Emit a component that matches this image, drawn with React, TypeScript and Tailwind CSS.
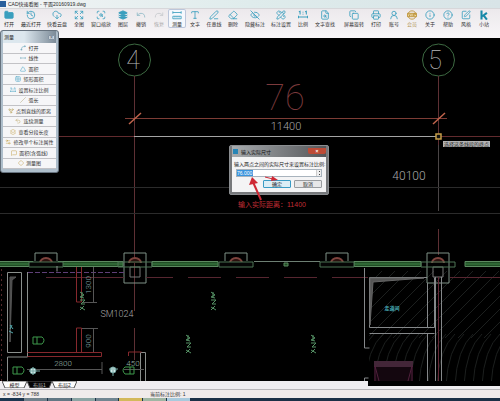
import React from "react";
import {
  Folder, History, CloudDownload, Expand, ScanSearch, Layers, Undo, Redo, Type, PenLine, Eraser,
  EyeOff, PencilRuler, FileSearch, Copy, Printer, UserRound, Info, CircleHelp, SquarePen,
  Spline, Triangle, Grid2x2, Slash, GitFork, Undo2, Layers2, Settings2, MessageSquare, Diamond,
  type LucideIcon,
} from "lucide-react";

type IconType = LucideIcon | React.FC<{ className?: string }>;

const Measure: React.FC<{ className?: string }> = ({ className }) => (
  <svg viewBox="0 0 24 24" className={className} fill="none" stroke="currentColor" strokeWidth="2" aria-hidden="true">
    <path d="M2 6h20M2 3v6M22 3v6M2 15h20v6H2zM7 15v3M12 15v3M17 15v3" />
  </svg>
);
const Ratio: React.FC<{ className?: string }> = ({ className }) => (
  <svg viewBox="0 0 24 24" className={className} fill="none" stroke="currentColor" strokeWidth="2.5" aria-hidden="true">
    <path d="M2 4l3-1v8M17 4l3-1v8M12 4v2M12 9v2M1 17h22M1 14v6M23 14v6" />
  </svg>
);
const Linear: React.FC<{ className?: string }> = ({ className }) => (
  <svg viewBox="0 0 24 24" className={className} fill="none" stroke="currentColor" strokeWidth="2" aria-hidden="true">
    <path d="M5 12h14" />
    <circle cx="3" cy="12" r="2" />
    <circle cx="21" cy="12" r="2" />
  </svg>
);
const Vip: React.FC<{ className?: string }> = ({ className }) => (
  <svg viewBox="0 0 24 24" className={className} fill="none" stroke="currentColor" strokeWidth="2" aria-hidden="true">
    <circle cx="12" cy="12" r="10" />
    <path d="M1 8h22v8H1z" fill="#f4e6bd" />
    <path d="M4 9l2 6 2-6M12 9v6M16 15V9h4v3h-4" />
  </svg>
);
const Station: React.FC<{ className?: string }> = ({ className }) => (
  <svg viewBox="0 0 24 24" className={className} fill="none" stroke="#1789a8" strokeWidth="5" aria-hidden="true">
    <path d="M6 1v22M19 7L8 15M11 13l8 10" />
  </svg>
);

type Tool = { label: string; icon: IconType; fill?: boolean; tone?: string; active?: boolean; gap?: boolean };

const tools: Tool[] = [
  { label: "打开", icon: Folder, fill: true },
  { label: "最近打开", icon: History },
  { label: "快看云盘", icon: CloudDownload },
  { label: "全图", icon: Expand },
  { label: "窗口缩放", icon: ScanSearch },
  { label: "图层", icon: Layers, fill: true },
  { label: "撤销", icon: Undo, tone: "text-[#8fb9c6]" },
  { label: "恢复", icon: Redo, tone: "text-[#c5c9cc]" },
  { label: "测量", icon: Measure, active: true },
  { label: "文字", icon: Type },
  { label: "任意线", icon: PenLine },
  { label: "删除", icon: Eraser },
  { label: "隐藏标注", icon: EyeOff },
  { label: "标注设置", icon: PencilRuler },
  { label: "比例", icon: Ratio },
  { label: "文字查找", icon: FileSearch },
  { label: "屏幕旋转", icon: Copy, gap: true },
  { label: "打印", icon: Printer },
  { label: "账号", icon: UserRound },
  { label: "会员", icon: Vip, tone: "text-[#b98d2d]" },
  { label: "关于", icon: Info },
  { label: "帮助", icon: CircleHelp },
  { label: "风格", icon: SquarePen },
  { label: "小站", icon: Station },
];

function toolWidth(label: string) {
  if (label.length === 4) return "w-[26px]";
  if (label.length === 3) return "w-5";
  return "w-[18px]";
}

function ToolButton({ label, icon: Icon, fill, tone, active, gap }: Tool) {
  return (
    <button
      type="button"
      className={`flex h-[19px] shrink-0 flex-col items-center gap-px rounded-[2px] pt-px whitespace-nowrap ${toolWidth(label)} ${
        gap ? "ml-[3px]" : ""
      } ${active ? "bg-[#f5f8fd] ring-1 ring-[#bcc6da] ring-inset" : ""}`}
    >
      <Icon className={`size-[10px] ${tone ?? "text-[#3a9fbe]"} ${fill ? "fill-[#3a9fbe]" : ""}`} />
      <span className={label === "会员" ? "text-[#b59a5c]" : label === "恢复" ? "text-[#a5a5a5]" : "text-[#2f2f2f]"}>{label}</span>
    </button>
  );
}

const measures: { label: string; icon: IconType; tone: string }[] = [
  { label: "打开", icon: Spline, tone: "text-[#5f9fb4]" },
  { label: "线性", icon: Linear, tone: "text-[#5f9fb4]" },
  { label: "面积", icon: Triangle, tone: "text-[#3f9fc0]" },
  { label: "矩形面积", icon: Grid2x2, tone: "text-[#3f9fc0]" },
  { label: "设置标注比例", icon: Ratio, tone: "text-[#3f9fc0]" },
  { label: "弧长", icon: Slash, tone: "text-[#b3a678]" },
  { label: "点到直线的距离", icon: GitFork, tone: "text-[#bda667]" },
  { label: "连续测量", icon: Undo2, tone: "text-[#bda667]" },
  { label: "查看分段长度", icon: Layers2, tone: "text-[#c5a24e]" },
  { label: "修改单个标注属性", icon: Settings2, tone: "text-[#c5a24e]" },
  { label: "面积(含弧线)", icon: MessageSquare, tone: "text-[#c5a24e]" },
  { label: "测量图", icon: Diamond, tone: "text-[#c5a24e]" },
];

function MeasurePalette() {
  return (
    <section aria-label="测量" className="absolute top-[30px] left-0 w-[59px] rounded-[3px] border border-[#66727e] bg-[#aebecb] px-[2px] pb-[3px]">
      <header className="flex h-3 items-center justify-between bg-linear-to-r from-[#dce7ee] from-40% to-[#7c8b98] px-px text-[#222]">
        <h2>测量</h2>
        <button type="button" aria-label="关闭" className="flex h-[5px] w-[7px] items-center justify-center rounded-[1px] border border-[#8594a4] bg-[#c8d2da] text-[#55606b]">×</button>
      </header>
      <ul className="grid h-[126px] grid-rows-12 bg-[#c9c9cc]">
        {measures.map(({ label, icon: Icon, tone }) => (
          <li key={label} className="flex border-b border-[#c2c2c6] bg-[#f6f6f8]">
            <button type="button" className="flex flex-1 items-center justify-center gap-[2px] whitespace-nowrap text-[#333]">
              <Icon className={`size-[6px] shrink-0 ${tone}`} />
              {label}
            </button>
          </li>
        ))}
      </ul>
    </section>
  );
}

function Column({ x, open }: { x: number; open?: boolean }) {
  return (
    <g fill="none" stroke="#7f9186" strokeWidth="1">
      <path d={open ? `M${x - 11} 261v-8h22v8` : `M${x - 11} 253h22v30h-22z`} />
      {!open && <path d={`M${x - 5} 267h10v10h-10z`} stroke="#777" />}
      <path d={`M${x - 6} 263a6 5 0 0 1 12 0`} stroke="#7d433d" strokeWidth="2" fill="#2a100e" />
      <path d={`M${x - 17} 262v5h34v-5z`} stroke="#4d7454" fill={open ? "#050505" : "none"} />
    </g>
  );
}

function Toilet({ x, y, flip }: { x: number; y: number; flip?: boolean }) {
  const s = flip ? -1 : 1;
  return <path d={`M${x} ${y - 3}h${9 * s}q${4 * s} 3 0 7h${-9 * s}zM${x + 4 * s} ${y - 3}v7`} fill="none" stroke="#3f9a4c" />;
}

function Dim({ x, y, size, children, color = "#a8a8a8", turn }: { x: number; y: number; size: number; children: string; color?: string; turn?: boolean }) {
  return (
    <text x={x} y={y} fontSize={size} fill={color} fontWeight="300" textAnchor="middle" transform={turn ? `rotate(-90 ${x} ${y})` : undefined} fontFamily="Roboto, sans-serif">
      {children}
    </text>
  );
}

const diagonals = Array.from({ length: 17 }, (_, i) => 276 + i * 13);
const steep = Array.from({ length: 18 }, (_, i) => 356 + i * 9);

function Drawing() {
  return (
    <svg viewBox="0 38 500 343" className="block w-full bg-black" role="img" aria-label="平面图">
      <clipPath id="hatch"><path d="M369 271H500V381H369z" /></clipPath>
      <g clipPath="url(#hatch)" stroke="#1c1f1e" strokeWidth="1" fill="none">
        {diagonals.map((x) => <path key={x} d={`M${x} 338l68-68`} />)}
        {steep.map((x) => <path key={x} d={`M${x} 385q2-36 18-51`} />)}
      </g>

      {/* axes and dimension lines */}
      <g fill="none" strokeWidth="1">
        <circle cx="134.500" cy="60" r="16" stroke="#3d6a42" />
        <circle cx="438.500" cy="60" r="16" stroke="#3d6a42" />
        <path d="M134.500 76V311M134.500 328V360M438.500 76V211M438.500 229V255" stroke="#5e3034" />
        <path d="M438.500 145V211" stroke="#4a4546" />
        <path d="M125 118.500H447" stroke="#7d3c35" />
        <path d="M129 124l12-11M433 124l12-11" stroke="#c0644c" strokeWidth="1.500" />
        <path d="M0 136.500H134M438 136.500H500" stroke="#622b2e" />
        <path d="M134 136.500H438" stroke="#a4a4a4" />
        <path d="M0 187.500H500M0 213.500H500" stroke="#2b2b2b" />
        <path d="M436 134h5v5h-5z" stroke="#c59d48" fill="#111" strokeWidth="1.500" />
      </g>
      <text x="133" y="69" fontSize="25" fontWeight="100" fontFamily="Roboto, sans-serif" fill="#b8b8b8" textAnchor="middle">4</text>
      <text x="435" y="69" fontSize="25" fontWeight="100" fontFamily="Roboto, sans-serif" fill="#b8b8b8" textAnchor="middle">5</text>
      <text x="285" y="110" fontSize="36" fontWeight="100" fontFamily="Roboto, sans-serif" fill="#7c3a3c" textAnchor="middle">76</text>
      <Dim x={286} y={130} size={11}>11400</Dim>
      <Dim x={409} y={180} size={12}>40100</Dim>

      {/* window wall */}
      <g fill="#204d25" stroke="#5d8b61" strokeWidth="1">
        <path d="M-1 261.500h34v5h-34zM58 261.500h65v5H58zM152 261.500h66v5h-66zM354 261.500h67v5h-67zM465 261.500h36v5h-36z" />
        <path d="M0 264h33M58 264h65M152 264h66M354 264h67M465 264h35" stroke="#3f8247" />
        <path d="M254 261.500h66" stroke="#6d7f73" />
        <path d="M284 263h4v3h-4z" />
      </g>
      <Column x={46} open />
      <Column x={135} />
      <Column x={236} open />
      <Column x={337} open />
      <Column x={438} />
      <path d="M46 277.500H124M146 277.500H173M188 277.500H221M236 277.500H269M284 277.500H317M332 277.500H368M450 277.500H500" stroke="#572630" />
      <path d="M28 272.500H124" stroke="#5f3f78" strokeDasharray="5 2" />
      <path d="M1.500 269V381" stroke="#54292b" strokeDasharray="2 3" />

      {/* left rooms */}
      <g fill="none" stroke="#8a8f8c" strokeWidth="1">
        <path d="M7.500 272.500h14v80h-14zM7.500 381v-24h20V272M57 271.500V266M140.500 381V352.500h5V381" />
        <path d="M10 277h6l-4 3-2 62z" fill="#4b4b4b" stroke="#555" />
      </g>
      <g fill="none" stroke="#86282d" strokeWidth="1">
        <path d="M76.500 267v35h5v-35M76.500 352v-24h5v24M27.500 352.500h74v4h-74M128.500 356v-4h13" />
      </g>
      <path d="M12 325l-2 4M10 325l3 4M9 331l4 2" stroke="#51a8ac" />
      <g stroke="#565656" fill="none">
        <path d="M93.500 267v35M83 302.500h14M93.500 328v24M82 328.500h16M27 369.500h75M102 362v12M124 369.500h20" />
      </g>
      <Dim x={91} y={285} size={8} color="#80a4a7" turn>1300</Dim>
      <Dim x={91} y={341} size={8} color="#80a4a7" turn>900</Dim>
      <Dim x={63} y={366} size={8} color="#9bb7aa">2800</Dim>
      <Dim x={133} y={366} size={8} color="#9bb7aa">450</Dim>
      <Dim x={117} y={317} size={9}>SM1024</Dim>
      <Toilet x={33} y={340} />
      <Toilet x={13} y={370} />
      <Toilet x={134} y={370} flip />
      <g fill="#d1e8e7" stroke="#74a5a1">
        <circle cx="33" cy="371" r="3" />
        <path d="M29 371h11M33 367v8" />
        <circle cx="113" cy="370" r="3" />
        <path d="M109 369h9M113 370v6" />
      </g>
      {[[82, 301], [213, 301], [188, 344], [313, 344]].map(([x, y]) => (
        <path key={`${x}-${y}`} d={`M${x - 2} ${y - 9}l4 3-4 2 4 1M${x} ${y - 9}v5M${x - 2} ${y - 1}h5l-4 4h4M${x - 2} ${y + 6}l5 3M${x + 2} ${y + 5}l-4 4`} fill="none" stroke="#559165" />
      ))}

      {/* right rooms */}
      <g fill="none" stroke="#85888a" strokeWidth="1">
        <path d="M364.500 268v80h5M364.500 381v-3h4M369.500 277.500H427M369.500 277.500v50h65v-50M369.500 333.500h65M427.500 283v45M427.500 333V381M435.500 277V381M441.500 277V381" />
        <path d="M370 278h54l-51 4-3 43z" fill="#555" stroke="#666" />
      </g>
      <path d="M438.500 277V381" stroke="#652937" />
      <path d="M374 361h39v6h-39z" fill="#432638" />
      <path d="M374 367h39v14h-39z" fill="#14070f" />
      <path d="M375 366l4 15M412 366l-4 15M375 366v15M412 366v15" stroke="#51203d" />
      <text x="392" y="310" fontSize="5" fontWeight="700" fill="#4ab1bc" textAnchor="middle" fontFamily="'Noto Sans CJK SC', sans-serif">走道间</text>
    </svg>
  );
}

function RatioDialog() {
  return (
    <form role="dialog" aria-label="输入实际尺寸" onSubmit={(e) => e.preventDefault()} className="absolute top-[107px] left-[229px] w-[100px] rounded-[2px] border border-[#8b8e91] bg-[#77797c] px-[2px] pb-[2px]">
      <header className="flex h-[11px] items-center gap-[3px] bg-linear-to-r from-[#a8acaf] to-[#55575a] text-[#151515]">
        <span className="ml-px size-[5px] bg-[#2785b6]" />
        <h2>输入实际尺寸</h2>
        <button type="button" aria-label="关闭" className="mb-[2px] ml-auto flex h-[6px] w-[18px] items-center justify-center rounded-b-[2px] bg-[#bd4b36] font-bold text-white">×</button>
      </header>
      <div className="flex h-[35px] flex-col bg-[#f4f4f5] px-[2px] pt-[4px] text-[#222]">
        <label htmlFor="distance" className="whitespace-nowrap">输入两点之间的实际尺寸来设置标注比例:</label>
        <div className="mx-[2px] mt-[2px] flex h-[8px] items-center border border-[#a8b3bd] bg-white">
          <input id="distance" defaultValue="76.000" className="h-[6px] w-4 bg-[#3994dd] text-white outline-none" />
          <span className="ml-auto flex h-full w-[5px] flex-col items-center justify-evenly border-l border-[#ccc] bg-[#eee]">
            <i className="size-px bg-[#444]" />
            <i className="size-px bg-[#444]" />
          </span>
        </div>
        <div className="mx-[2px] mt-[3px] flex justify-end gap-[3px]">
          <button type="submit" className="h-[8px] w-[28px] rounded-[1px] border border-[#3a9bc4] bg-[#dceef6]">确定</button>
          <button type="button" className="h-[8px] w-[28px] rounded-[1px] border border-[#9a9da0] bg-[#e7e7e8]">取消</button>
        </div>
      </div>
    </form>
  );
}

const taskColors = ["bg-[#1b3650]", "bg-[#70818c]", "bg-[#627784]", "bg-[#8ba4a4]", "bg-[#718591]", "bg-[#d3b95b]", "bg-[#9fb6a4]", "bg-[#a8cadd]"];

export default function App() {
  return (
    <div className="relative flex min-h-screen w-full flex-col overflow-hidden bg-[#f0edf0] font-['Liberation_Sans','Noto_Sans_CJK_SC',sans-serif] text-[5px] leading-[6px]">
      <header className="flex h-2 items-center gap-[2px] bg-linear-to-r from-[#f2f4f5] via-[#dfecec] to-[#d8e4e7] text-[#292929]">
        <span className="size-[6px] bg-[#285f9c]" />
        <h1>CAD快速看图 - 平面20160919.dwg</h1>
      </header>
      <nav aria-label="工具栏" className="flex h-[30px] border-t border-[#d7d7da] bg-linear-to-b from-[#ece9ec] to-[#f8f6f8]">
        {tools.map((tool) => <ToolButton key={tool.label} {...tool} />)}
      </nav>

      <main className="relative">
        <Drawing />
        <p className="absolute top-[103px] left-[443px] bg-[#b4b4b4] px-px whitespace-nowrap text-[#292929]">选择这条线段的终点</p>
        <RatioDialog />
        <svg viewBox="0 0 40 36" className="absolute top-[136px] left-[244px] h-9 w-10" fill="none" stroke="#ce2935" aria-hidden="true">
          <path d="M17 26L9 8" strokeWidth="2" />
          <path d="M8 3L5 11l9-2z" fill="#ce2935" stroke="none" />
          <path d="M21 3l8 2" strokeWidth="1" />
          <path d="M28 2l6 4-7 1z" fill="#ce2935" stroke="none" />
        </svg>
        <p className="absolute top-[162px] left-[238px] text-[7px] leading-[9px] whitespace-nowrap text-[#c12d35]">输入实际距离：11400</p>
      </main>
      <MeasurePalette />

      <nav aria-label="布局" className="flex h-[9px] border-b border-[#b9b7ba] bg-[#efedf0] pl-[2px]">
        {["模型", "布局1", "布局2"].map((tab, i) => (
          <button key={tab} type="button" className={`relative h-[7px] w-[25px] ${i === 1 ? "text-[#bbb]" : "text-[#222]"}`}>
            <svg viewBox="0 0 25 7" className="absolute inset-0 size-full" aria-hidden="true">
              <path d="M0 0L3 7H22L25 0z" fill={i === 1 ? "#050505" : "#fdfdfd"} stroke="#555" strokeWidth="1" />
            </svg>
            <span className="relative">{tab}</span>
          </button>
        ))}
        <span className="ml-auto h-[5px] w-[132px] bg-black" />
      </nav>
      <footer className="flex h-2 items-center bg-[#f0ebeb] text-[#333]">
        <span className="w-[150px] pl-[3px]">x = -834 y = 788</span>
        <span>当前标注比例: 1</span>
      </footer>
      <div className="flex h-[3px] gap-px bg-[#1b3047] pr-[310px]">
        {taskColors.map((color) => <span key={color} className={`flex-1 ${color}`} />)}
      </div>
    </div>
  );
}
